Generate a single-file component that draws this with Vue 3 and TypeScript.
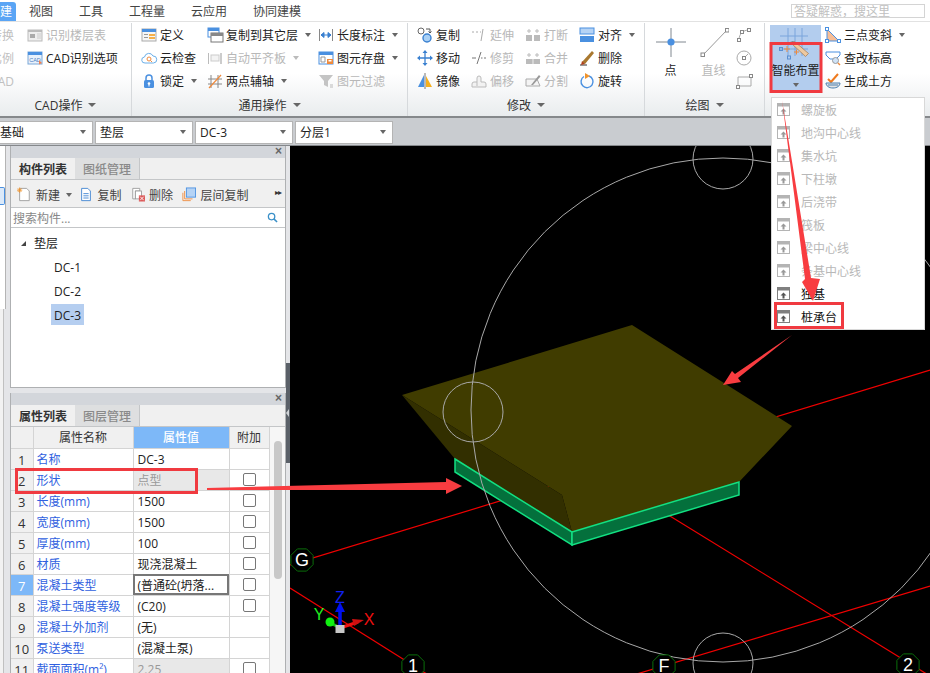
<script setup lang="ts">
interface Tool { icon: string; text: string; off?: boolean; caret?: boolean }
interface Col { width: number; tools: Tool[] }
interface Group { label: string; width: number; cols: Col[] }

const box = (x: number, y: number, s = 3, c = '#4a90e0') =>
  `<rect x="${x - s / 2}" y="${y - s / 2}" width="${s}" height="${s}" fill="#fff" stroke="${c}"/>`

const icons: Record<string, string> = {
  blank: '',
  floor: '<rect x="1" y="3" width="14" height="11" fill="#eee" stroke="#bbb"/><rect x="1" y="3" width="14" height="2" fill="#bbb"/><rect x="3" y="7" width="5" height="4" fill="#aaa"/><path d="M10 7h4M10 9h4M10 11h4" stroke="#ccc"/>',
  cadopt: '<rect x="1" y="2" width="14" height="12" fill="#e8f1fb" stroke="#7aa7d8"/><rect x="1" y="2" width="14" height="3" fill="#4a90e0"/><text x="2.2" y="12" font-size="5.5" fill="#4a80c0" font-family="Liberation Sans">CAD</text><path d="M12 10l3 3-3 1.5z" fill="#f08050"/>',
  def: '<rect x="1" y="2" width="14" height="12" fill="#f6f6f6" stroke="#aaa"/><rect x="1" y="2" width="14" height="3" fill="#4a90e0"/><path d="M3 7.5h4M3 10.5h4" stroke="#999"/><rect x="8" y="7" width="6" height="2" fill="#f5b04a"/><rect x="8" y="10" width="6" height="2" fill="#f5b04a"/>',
  cloud: '<path d="M4 13a3 3 0 0 1-.5-6A4.5 4.5 0 0 1 12 6a3.5 3.5 0 0 1 .5 7z" fill="#fff" stroke="#6aaee8"/><circle cx="8" cy="9" r="2" fill="none" stroke="#ef8a3c"/><path d="M9.5 10.5l1.5 1.5" stroke="#ef8a3c"/>',
  lock: '<rect x="3" y="7" width="10" height="8" rx="1.5" fill="#4a90e0"/><path d="M5 7V5a3 3 0 0 1 6 0v2" fill="none" stroke="#4a90e0" stroke-width="1.5"/><circle cx="8" cy="10.5" r="1.3" fill="#fff"/><rect x="7.5" y="11" width="1" height="2.5" fill="#fff"/>',
  copyf: '<rect x="1" y="1" width="11" height="9" fill="#fff" stroke="#4a90e0"/><rect x="1" y="1" width="11" height="3" fill="#4a90e0"/><rect x="4" y="6" width="12" height="9" fill="#fff" stroke="#777"/><rect x="4" y="6" width="12" height="3" fill="#888"/>',
  align: '<path d="M1.5 3v11" stroke="#bbb"/><rect x="4" y="5" width="8" height="6" fill="#f3f3f3" stroke="#ccc"/><rect x="13" y="3" width="2" height="11" fill="#ccc"/>',
  axis: '<path d="M4 2v13M11 2v13M1 6h14M1 11h14" stroke="#888"/><path d="M2 15L14 2" stroke="#ef8a3c" stroke-width="1.2"/>',
  dim: '<path d="M1.5 2v12M14.5 2v12" stroke="#888"/><path d="M3 8h10M3 8l3-2.5v5zM13 8l-3-2.5v5z" stroke="#3a80d0" fill="#3a80d0"/>',
  save: '<rect x="1" y="2" width="14" height="12" fill="#fff" stroke="#4a90e0"/><rect x="1" y="2" width="14" height="3" fill="#4a90e0"/><path d="M3 7h4v5H3z" fill="none" stroke="#999"/><rect x="9" y="9" width="6" height="5" fill="#ef8a3c"/><rect x="10.5" y="10" width="3" height="1.5" fill="#fff"/>',
  filter: '<path d="M1 2h14L10 8v6L6 12V8z" fill="#c4c4c4"/><path d="M12 12h3M12 14h3" stroke="#bbb"/>',
  cp: '<circle cx="4" cy="4" r="3" fill="#fff" stroke="#666"/><circle cx="10" cy="11" r="4" fill="#a9d0f5" stroke="#3a80d0" stroke-width="1.4"/><path d="M9 2h4v4M11.5 4.5l1.5 1.5 1.5-1.5" fill="none" stroke="#555"/>',
  move: '<path d="M8 2v12M2 8h12" stroke="#3a80d0" stroke-width="1.3"/><path d="M8 0l2.5 3h-5zM8 16l2.5-3h-5zM0 8l3-2.5v5zM16 8l-3-2.5v5z" fill="#3a80d0"/>',
  mirror: '<path d="M7 2L1 14h6z" fill="#4a90e0"/><path d="M9 3l6 11H9z" fill="#f5b01e"/><path d="M8 0v16" stroke="#777"/>',
  ext: '<path d="M1 5h2M5 5h2M9 5h1M12 2l-2 12" stroke="#aaa" fill="none"/>',
  trim: '<path d="M1 8h4M10 8h1.5M13 8h2M10 2L6 14" stroke="#777" fill="none"/>',
  off: '<path d="M6 13V5a2 2 0 0 1 4 0v4h3a2 2 0 0 1 2 2v3H1v-3a2 2 0 0 1 2-2h3" fill="#f2f2f2" stroke="#bbb"/>',
  brk: '<rect x="1" y="8" width="6" height="6" fill="#bbb"/><rect x="9" y="8" width="6" height="6" fill="#bbb"/><path d="M4 2v4M2 4h4M12 2v4M10 4h4" stroke="#bbb"/>',
  merge: '<rect x="1" y="9" width="14" height="5" fill="#bbb"/><path d="M8 9v5" stroke="#eee"/><path d="M4 3v4M2 5h4M12 3v4M10 5h4" stroke="#bbb"/>',
  split: '<path d="M1 6h11l3 7H1z" fill="#f4f4f4" stroke="#aaa"/><path d="M6 12L14 2l1.5 1.5L8 12z" fill="#999"/>',
  alignr: '<rect x="1" y="1" width="14" height="6" fill="#b5d3f5" stroke="#4a90e0"/><rect x="1" y="9" width="14" height="6" fill="#4a90e0"/>',
  del: '<path d="M1 15h7" stroke="#333"/><path d="M3 12L13 1l2 2L6 14z" fill="#a9782f"/><path d="M2 15l1-4 3 3z" fill="#b0401e"/>',
  rot: '<path d="M10 3a6 6 0 1 1-5 .5" fill="none" stroke="#4a90e0" stroke-width="1.4"/><path d="M6 0l5 3-5 3z" fill="#f0932b"/>',
  tilt: '<path d="M2 2v12h12z" fill="#f7bd95" stroke="#4a90e0"/>' + box(2, 2) + box(2, 14) + box(14, 14),
  elev: '<path d="M1 2h14v3l-4 4H5L1 5z" fill="#fff" stroke="#4a90e0"/><circle cx="10.5" cy="10.5" r="3" fill="#cfe3f8" stroke="#999"/><path d="M13 13l2 2" stroke="#ef8a3c" stroke-width="1.5"/>',
  earth: '<path d="M3 6l3 3 7-8" fill="none" stroke="#ef7a1e" stroke-width="2"/><path d="M1 10h14c0 3-3 5-7 5s-7-2-7-5z" fill="#e4e4e4" stroke="#4a80b0"/><path d="M3 12h10" stroke="#4a80b0"/>',
  arc: '<path d="M3 13C3 7 7 3 13 3" fill="none" stroke="#aaa"/>' + box(3, 13, 3, '#888') + box(6, 5, 3, '#888') + box(13, 3, 3, '#888'),
  circ: '<circle cx="8" cy="8" r="7" fill="none" stroke="#aaa"/><path d="M8 8l4-4" stroke="#aaa"/>' + box(8, 8, 3, '#888'),
  rect: '<path d="M2 4h13v9H2z" fill="none" stroke="#aaa"/>' + box(15, 3, 3, '#888') + box(2, 14, 3, '#888')
}

const t = (icon: string, text: string, off = false, caret = false): Tool => ({ icon, text, off, caret })

const groups: Group[] = [
  { label: '通用操作', width: 276, cols: [
    { width: 66, tools: [t('def', '定义'), t('cloud', '云检查'), t('lock', '锁定', false, true)] },
    { width: 111, tools: [t('copyf', '复制到其它层', false, true), t('align', '自动平齐板', true, true), t('axis', '两点辅轴', false, true)] },
    { width: 89, tools: [t('dim', '长度标注', false, true), t('save', '图元存盘', false, true), t('filter', '图元过滤', true)] }
  ] },
  { label: '修改', width: 237, cols: [
    { width: 54, tools: [t('cp', '复制'), t('move', '移动'), t('mirror', '镜像')] },
    { width: 54, tools: [t('ext', '延伸', true), t('trim', '修剪', true), t('off', '偏移', true)] },
    { width: 54, tools: [t('brk', '打断', true), t('merge', '合并', true), t('split', '分割', true)] },
    { width: 60, tools: [t('alignr', '对齐', false, true), t('del', '删除'), t('rot', '旋转')] }
  ] }
]

const thirdCol = ['arc', 'circ', 'rect']
const rightTools: Tool[] = [t('tilt', '三点变斜', false, true), t('elev', '查改标高'), t('earth', '生成土方')]
const combos = ['基础', '垫层', 'DC-3', '分层1']
const menus = ['视图', '工具', '工程量', '云应用', '协同建模']
const dcs = ['DC-1', 'DC-2', 'DC-3']
const dropdown = [
  { text: '螺旋板', off: true }, { text: '地沟中心线', off: true }, { text: '集水坑', off: true },
  { text: '下柱墩', off: true }, { text: '后浇带', off: true }, { text: '筏板', off: true },
  { text: '梁中心线', off: true }, { text: '条基中心线', off: true }, { text: '独基', off: false }, { text: '桩承台', off: false }
]

interface Row { name: string; value: string; check: boolean; gray?: boolean; black?: boolean; active?: boolean }
const rows: Row[] = [
  { name: '名称', value: 'DC-3', check: false },
  { name: '形状', value: '点型', check: true, gray: true },
  { name: '长度(mm)', value: '1500', check: true },
  { name: '宽度(mm)', value: '1500', check: true },
  { name: '厚度(mm)', value: '100', check: true },
  { name: '材质', value: '现浇混凝土', check: true },
  { name: '混凝土类型', value: '(普通砼(坍落...', check: true, active: true },
  { name: '混凝土强度等级', value: '(C20)', check: true },
  { name: '混凝土外加剂', value: '(无)', check: false },
  { name: '泵送类型', value: '(混凝土泵)', check: false },
  { name: '截面面积(m²)', value: '2.25', check: true, gray: true }
]

const hexPts = (cx: number, cy: number, r: number) =>
  Array.from({ length: 8 }, (_, i) => {
    const a = (Math.PI / 4) * i + Math.PI / 8
    return `${(cx + r * Math.cos(a)).toFixed(1)},${(cy + r * Math.sin(a)).toFixed(1)}`
  }).join(' ')
const axes = [
  { label: 'G', x: 302, y: 560 },
  { label: '1', x: 413, y: 666 },
  { label: 'F', x: 664, y: 666 },
  { label: '2', x: 908, y: 665 }
]
</script>

<template>
  <div class="app">
    <header class="menubar">
      <span class="menu active">建</span>
      <span v-for="m in menus" :key="m" class="menu">{{ m }}</span>
      <span class="qsearch">答疑解惑，搜这里</span>
    </header>

    <section class="ribbon">
      <div class="group cad">
        <div class="group-body">
          <div class="col clip">
            <span class="clip-text">转换</span>
            <span class="clip-text">比例</span>
            <span class="clip-text">CAD</span>
          </div>
          <div class="col">
            <div class="tool off"><svg class="ico" viewBox="0 0 16 16" v-html="icons.floor"></svg><span>识别楼层表</span></div>
            <div class="tool"><svg class="ico" viewBox="0 0 16 16" v-html="icons.cadopt"></svg><span>CAD识别选项</span></div>
          </div>
        </div>
        <div class="group-label"><span>CAD操作</span><i class="caret dark"></i></div>
      </div>

      <div v-for="g in groups" :key="g.label" class="group" :style="{ width: g.width + 'px' }">
        <div class="group-body pad">
          <div v-for="(c, ci) in g.cols" :key="ci" class="col" :style="{ width: c.width + 'px' }">
            <div v-for="tool in c.tools" :key="tool.text" class="tool" :class="{ off: tool.off }">
              <svg class="ico" viewBox="0 0 16 16" v-html="icons[tool.icon]"></svg>
              <span>{{ tool.text }}</span>
              <i v-if="tool.caret" class="caret" :class="{ faint: tool.off }"></i>
            </div>
          </div>
        </div>
        <div class="group-label"><span>{{ g.label }}</span><i class="caret dark"></i></div>
      </div>

      <div class="group draw">
        <div class="group-body draw-body">
          <div class="big">
            <svg class="big-ico" viewBox="0 0 30 30">
              <path d="M0 15h30M15 1v29" stroke="#808890" />
              <circle cx="15" cy="15" r="3.6" fill="#4a90e0" />
            </svg>
            <span>点</span>
          </div>
          <div class="big off">
            <svg class="big-ico" viewBox="0 0 30 30">
              <path d="M4 28L28 3" stroke="#999" />
              <rect x="2" y="26" width="3.5" height="3.5" fill="#fff" stroke="#888" />
              <rect x="26.5" y="1.5" width="3.5" height="3.5" fill="#fff" stroke="#888" />
            </svg>
            <span>直线</span>
          </div>
          <div class="col small-col">
            <div v-for="n in thirdCol" :key="n" class="tool"><svg class="ico" viewBox="0 0 16 16" v-html="icons[n]"></svg></div>
          </div>
        </div>
        <div class="group-label"><span>绘图</span><i class="caret dark"></i></div>
      </div>

      <div class="group smart">
        <div class="group-body smart-body">
          <div class="smart-btn">
            <svg class="smart-ico" viewBox="0 0 51 37">
              <path d="M10 11h28M10 24h28M18 3v28M25 3v28M32 3v28" stroke="#7aa5dc" fill="none" />
              <rect x="9.5" y="22.5" width="3" height="3" fill="none" stroke="#5a8fd0" />
              <rect x="17.5" y="31" width="3" height="3" fill="none" stroke="#5a8fd0" />
              <path d="M14 24h6M17 21v6M24 27h5M26.5 24.5v5" stroke="#ef8a3c" />
              <path d="M22 19l2.5-2.5 14 12-3 3z" fill="#eec9a0" stroke="#a5774a" stroke-width=".7" />
              <path d="M20 17l4-1-2 3z" fill="#666" />
            </svg>
            <span>智能布置</span>
            <i class="caret"></i>
          </div>
          <div class="col">
            <div v-for="tool in rightTools" :key="tool.text" class="tool">
              <svg class="ico" viewBox="0 0 16 16" v-html="icons[tool.icon]"></svg>
              <span>{{ tool.text }}</span>
              <i v-if="tool.caret" class="caret"></i>
            </div>
          </div>
        </div>
      </div>
    </section>

    <section class="combos">
      <div v-for="c in combos" :key="c" class="combo"><span>{{ c }}</span><i class="caret"></i></div>
    </section>

    <main class="work">
      <aside class="sliver">
        <div class="sliver-top"><div class="sliver-btn"></div></div>
        <div class="sliver-bottom"></div>
      </aside>

      <div class="panels">
        <section class="panel list-panel">
          <div class="title-bar"><span class="close">×</span></div>
          <div class="tabs">
            <span class="tab on">构件列表</span>
            <span class="tab">图纸管理</span>
          </div>
          <div class="toolbar">
            <svg class="tb-ico first" viewBox="0 0 16 16"><path d="M3 1h8l3 3v11H3z" fill="#fff" stroke="#999" /><path d="M1 1l4 4M5 1L1 5M3 0v6M0 3h6" stroke="#f0932b" /></svg>
            <span>新建</span><i class="caret"></i>
            <svg class="tb-ico" viewBox="0 0 16 16"><path d="M3 1h7l3 3v11H3z" fill="#fff" stroke="#3a80d0" /><path d="M5 7h6M5 9.5h6M5 12h6" stroke="#3a80d0" /></svg>
            <span>复制</span>
            <svg class="tb-ico" viewBox="0 0 16 16"><path d="M2 1h8v3H5v9H2z" fill="#fff" stroke="#999" /><rect x="5" y="4" width="7" height="9" fill="#fff" stroke="#999" /><rect x="9" y="9" width="7" height="7" fill="#dc5a5a" /><path d="M10.5 10.5l4 4M14.5 10.5l-4 4" stroke="#fff" /></svg>
            <span>删除</span>
            <svg class="tb-ico" viewBox="0 0 16 16"><rect x="5" y="0.5" width="10.5" height="10.5" fill="#b5d3f5" stroke="#4a90e0" /><path d="M3 4v9h9M1 6v9h9" fill="none" stroke="#ef8a3c" /></svg>
            <span>层间复制</span>
            <span class="more">▸▸</span>
          </div>
          <div class="search">
            <span>搜索构件...</span>
            <svg class="search-ico" viewBox="0 0 12 12"><circle cx="5" cy="5" r="3.5" fill="none" stroke="#3a90c8" stroke-width="1.4" /><path d="M7.5 7.5l3.5 3.5" stroke="#3a90c8" stroke-width="1.6" /></svg>
          </div>
          <div class="tree">
            <div class="tree-root"><i class="tree-arrow"></i><span>垫层</span></div>
            <div v-for="d in dcs" :key="d" class="tree-leaf"><span :class="{ picked: d === 'DC-3' }">{{ d }}</span></div>
          </div>
        </section>

        <section class="panel prop-panel">
          <div class="title-bar"><span class="close">×</span></div>
          <div class="tabs">
            <span class="tab on">属性列表</span>
            <span class="tab">图层管理</span>
          </div>
          <div class="prop-body">
            <table class="props">
              <colgroup><col class="c-num" /><col class="c-name" /><col class="c-val" /><col class="c-add" /></colgroup>
              <thead>
                <tr><th></th><th>属性名称</th><th class="head-val">属性值</th><th>附加</th></tr>
              </thead>
              <tbody>
                <tr v-for="(r, i) in rows" :key="r.name">
                  <td class="num" :class="{ 'num-on': r.active }">{{ i + 1 }}</td>
                  <td class="name">{{ r.name }}</td>
                  <td class="val" :class="{ gray: r.gray, active: r.active }"><span>{{ r.value }}</span></td>
                  <td class="add"><span v-if="r.check" class="check"></span></td>
                </tr>
              </tbody>
            </table>
            <div class="scroll"><div class="thumb"></div></div>
          </div>
        </section>
      </div>

      <div class="splitter"><div class="split-dark"><i class="split-handle"></i></div></div>

      <div class="canvas">
        <svg class="scene" viewBox="290 146 640 527">
          <g stroke="#f00000" stroke-width="1.2" fill="none">
            <path d="M290 565L930 370" />
            <path d="M290 588L430 676" />
            <path d="M600 473L930 676" />
            <path d="M630 676L930 586" />
          </g>
          <polygon points="402,395 632,325 792,426 739,482 572,532 562,495" fill="#403c00" />
          <polygon points="402,395 562,495 572,532 455,459" fill="#322f00" />
          <polygon points="455,459 572,532 572,545 455,472" fill="#04703c" stroke="#12e082" stroke-width="1.5" />
          <polygon points="572,532 739,482 739,495 572,545" fill="#04703c" stroke="#12e082" stroke-width="1.5" />
          <g fill="none" stroke="#a8a8a8">
            <circle cx="723" cy="410" r="252" />
            <circle cx="473" cy="412" r="30" />
            <circle cx="723" cy="159" r="30" />
            <circle cx="723" cy="663" r="30" />
          </g>
          <g v-for="a in axes" :key="a.label">
            <polygon :points="hexPts(a.x, a.y, 12)" fill="#000" stroke="#0a6e0a" />
            <text :x="a.x" :y="a.y + 6" text-anchor="middle" class="axis-label">{{ a.label }}</text>
          </g>
          <path d="M340 606v20" stroke="#0010f0" stroke-width="3.5" />
          <path d="M340 602l5 10h-10z" fill="#0010f0" />
          <path d="M340 628L329 622" stroke="#10c010" stroke-width="3" />
          <circle cx="330" cy="622" r="4.5" fill="#10f010" />
          <path d="M340 628L358 622" stroke="#f01010" stroke-width="3" />
          <path d="M352 619l12 1-10 6z" fill="#d01010" />
          <rect x="335.5" y="625" width="9" height="8" fill="#c8c8c8" />
          <text x="340" y="603" text-anchor="middle" class="gizmo z">Z</text>
          <text x="319" y="620" text-anchor="middle" class="gizmo y">Y</text>
          <text x="369" y="625" text-anchor="middle" class="gizmo x">X</text>
        </svg>
      </div>
    </main>

    <nav class="dropdown">
      <div v-for="d in dropdown" :key="d.text" class="drop-item" :class="{ off: d.off }">
        <svg class="drop-ico" viewBox="0 0 13 13">
          <rect x="0.5" y="0.5" width="12" height="12" fill="#fff" :stroke="d.off ? '#b4b4b4' : '#808080'" />
          <rect x="0.5" y="0.5" width="12" height="3" :fill="d.off ? '#b4b4b4' : '#808080'" />
          <path d="M6.5 5.5l3 3h-2v3h-2v-3h-2z" :fill="d.off ? '#999' : '#555'" />
        </svg>
        <span>{{ d.text }}</span>
      </div>
    </nav>

    <svg class="notes" viewBox="0 0 930 673">
      <g fill="none" stroke="#f03a40" stroke-width="3">
        <rect x="771" y="43.5" width="50" height="48" />
        <rect x="775.5" y="303.5" width="67" height="24" />
        <rect x="16.5" y="469.5" width="180" height="23" />
      </g>
      <g fill="#f83c40">
        <polygon points="782,100 805,279 802,282 813,301 820,279 811,278" />
        <polygon points="792,335 738,378 741,382 723,385 732,371 735,374" />
        <polygon points="207,488 446,482 446,478 462,486 446,494 446,490 207,490" />
      </g>
    </svg>
  </div>
</template>

<style>
html, body { margin: 0; padding: 0; background: #fff; }
</style>

<style scoped>
.app {
  position: relative;
  width: 930px;
  height: 673px;
  overflow: hidden;
  display: flex;
  flex-direction: column;
  font-family: "Open Sans", "Noto Sans CJK SC", "Noto Sans", sans-serif;
  font-size: 12px;
  line-height: 16px;
  color: #222;
  background: #fff;
}
.menubar {
  height: 21px;
  flex: none;
  display: flex;
  align-items: flex-end;
  background: #fff;
  border-bottom: 1px solid #e2e2e2;
  color: #444;
}
.menu { height: 19px; line-height: 19px; padding: 0 13px; }
.menu.active { width: 16px; box-sizing: border-box; padding: 0 4px 0 0; text-align: right; background: #5aa5f5; color: #fff; border-radius: 0 3px 0 0; }
.qsearch {
  position: absolute;
  left: 791px;
  top: 4px;
  width: 134px;
  height: 14px;
  line-height: 13px;
  box-sizing: border-box;
  border: 1px solid #d4d4d4;
  padding-left: 2px;
  color: #c0c0c0;
  overflow: hidden;
}
.ribbon {
  height: 96px;
  flex: none;
  display: flex;
  background: linear-gradient(#fff 55%, #e9ecee);
  border-bottom: 2px solid #85888b;
  box-sizing: border-box;
}
.group {
  flex: none;
  box-sizing: border-box;
  border-right: 1px solid #d6d9dc;
  margin-top: 1px;
  display: flex;
  flex-direction: column;
  justify-content: space-between;
}
.group.cad { width: 132px; }
.group.draw { width: 120px; }
.group.smart { flex: 1; border-right: none; }
.group-body { display: flex; height: 69px; }
.group-body.pad { padding-left: 9px; }
.group-label { height: 22px; display: flex; align-items: center; justify-content: center; gap: 6px; color: #333; }
.group-label span { padding-top: 2px; }
.col { display: flex; flex-direction: column; flex: none; }
.clip { width: 27px; padding-right: 13px; box-sizing: border-box; align-items: flex-end; color: #c0c0c0; overflow: hidden; }
.clip-text { height: 23px; line-height: 25px; white-space: nowrap; flex: none; }
.tool { height: 23px; display: flex; align-items: center; white-space: nowrap; }
.tool span { padding-top: 2px; }
.tool.off { color: #b8b8b8; }
.ico { width: 16px; height: 16px; margin-right: 3px; flex: none; overflow: visible; }
.caret {
  display: inline-block;
  width: 0;
  height: 0;
  margin-left: 7px;
  border-left: 3.5px solid transparent;
  border-right: 3.5px solid transparent;
  border-top: 4px solid #666;
  flex: none;
}
.caret.faint { border-top-color: #bbb; }
.caret.dark { margin-left: 0; border-left-width: 4px; border-right-width: 4px; border-top: 4px solid #666; }
.draw-body { padding-left: 4px; }
.big { width: 43px; display: flex; flex-direction: column; align-items: center; flex: none; padding-top: 4px; }
.big span { padding-top: 1px; }
.big.off { color: #b8b8b8; }
.big-ico { width: 30px; height: 30px; margin-bottom: 5px; }
.small-col { margin-left: 1px; }
.smart-body { padding-left: 5px; }
.smart-btn {
  width: 51px;
  height: 67px;
  background: #b3cdee;
  display: flex;
  flex-direction: column;
  align-items: center;
  flex: none;
  margin-top: 2px;
  margin-right: 4px;
}
.smart-btn .caret { margin: 4px 0 0; }
.smart-ico { width: 51px; height: 37px; flex: none; }
.smart-btn span { white-space: nowrap; line-height: 16px; padding-top: 1px; }
.combos {
  height: 28px;
  flex: none;
  display: flex;
  gap: 2px;
  align-items: center;
  background: #c9ccd0;
  box-sizing: border-box;
  padding-left: 0;
}
.combo {
  width: 98px;
  height: 23px;
  box-sizing: border-box;
  background: #fff;
  border: 1px solid #b4b4b4;
  display: flex;
  align-items: center;
  justify-content: space-between;
  padding: 0 6px 0 4px;
  flex: none;
}
.combo span { padding-top: 2px; }
.combo:first-child { width: 93px; padding-left: 0; border-left: none; }
.combo .caret { margin: 0; }
.work { flex: 1; min-height: 0; display: flex; background: #e4e5e8; border-top: 1px solid #85888b; margin-top: -1px; }
.sliver { width: 10px; flex: none; display: flex; flex-direction: column; }
.sliver-top { width: 6px; height: 217px; box-sizing: border-box; background: #fff; border-right: 1px solid #b4b4b4; padding-top: 41px; overflow: hidden; }
.sliver-btn { width: 5px; height: 18px; box-sizing: border-box; border: 1px solid #4a90e0; background: #dbe9f9; border-left: none; border-radius: 0 2px 2px 0; }
.sliver-bottom { width: 3px; height: 100%; background: #f2f2f2; border-right: 1px solid #c0c0c0; }
.panels { width: 276px; flex: none; display: flex; flex-direction: column; gap: 5px; }
.panel { box-sizing: border-box; border: 1px solid #aeb0b2; border-top: none; background: #fff; overflow: hidden; }
.list-panel { height: 242px; flex: none; display: flex; flex-direction: column; }
.prop-panel { flex: 1; min-height: 0; border-bottom: none; }
.title-bar { height: 12px; background: #d3d6db; position: relative; }
.close { position: absolute; right: 3px; top: -3px; font: bold 12px/16px "Liberation Sans", sans-serif; color: #666; }
.tabs { height: 22px; display: flex; background: #f0f0f0; border-bottom: 1px solid #c4c6c8; box-sizing: border-box; }
.tab { width: 65px; text-align: center; line-height: 23px; background: #dedfe0; color: #8a8a8a; border-right: 1px solid #c4c6c8; box-sizing: border-box; font-weight: 500; }
.tab.on { width: 64px; background: #f0f0f0; color: #333; font-weight: 700; border-right: none; }
.toolbar {
  height: 28px;
  display: flex;
  align-items: center;
  background: #f0f0f0;
  border-bottom: 1px solid #c4c6c8;
  box-sizing: border-box;
  color: #444;
  padding: 2px 0 0 6px;
  white-space: nowrap;
  position: relative;
}
.toolbar > span:not(.more) { padding-top: 2px; }
.tb-ico { width: 14px; height: 15px; margin: 0 4.5px 0 9px; flex: none; }
.tb-ico.first { margin: 0 5px 0 0; }
.toolbar .caret { margin: 0 -2px 0 6px; }
.more { position: absolute; right: 4px; top: 6px; font: 8px/14px "DejaVu Sans", sans-serif; color: #333; letter-spacing: -1px; }
.search { height: 20px; display: flex; align-items: center; justify-content: space-between; padding: 0 7px 0 2px; border-bottom: 1px solid #c4c6c8; color: #888; box-sizing: border-box; }
.search span { padding-top: 2px; }
.search-ico { width: 11px; height: 11px; }
.tree { flex: 1; background: #fff; padding-top: 3px; }
.tree-root { height: 24px; display: flex; align-items: center; padding-left: 10px; color: #222; margin-bottom: -1px; }
.tree-root span { padding-top: 2px; }
.tree-arrow { width: 0; height: 0; border-left: 5px solid transparent; border-bottom: 5px solid #444; margin-right: 8px; }
.tree-leaf { height: 24px; padding-left: 40px; display: flex; align-items: center; }
.tree-leaf span { padding: 0 3px; height: 21px; line-height: 23px; }
.tree-leaf .picked { background: #b5cef0; }
.prop-body { display: flex; align-items: flex-start; }
.props { border-collapse: collapse; table-layout: fixed; width: 258px; flex: none; }
.c-num { width: 22px; }
.c-name { width: 100px; }
.c-val { width: 96px; }
.c-add { width: 40px; }
.props th, .props td { height: 21px; padding: 2px 0 0; border: 1px solid #d4d4d4; box-sizing: border-box; white-space: nowrap; overflow: hidden; font-weight: 400; }
.props th { background: #f0f0f0; color: #333; text-align: center; border-top: none; }
.props th:first-child, .props td:first-child { border-left: none; }
.props .head-val { background: #7db8f8; color: #fff; font-weight: 500; }
.num { background: #f0f0f0; text-align: center; color: #333; font-size: 13px; }
.num-on { background: #7db8f8; color: #fff; font-weight: 700; }
.name { color: #2f5fe0; padding-left: 3px !important; }
.val { padding-left: 4px !important; color: #222; }
.val.gray { background: #e8e8e8; color: #999; }
.val.active { outline: 2px solid #777; outline-offset: -2px; }
.props .add { text-align: center; line-height: 0; padding-top: 0; }
.check { display: inline-block; width: 13px; height: 13px; box-sizing: border-box; border: 1px solid #777; border-radius: 2px; background: #fff; vertical-align: middle; }
.scroll { flex: 1; height: 260px; background: #f6f6f6; position: relative; }
.thumb { position: absolute; left: 4px; top: 14px; width: 8px; height: 138px; border-radius: 4px; background: #c8c8c8; }
.splitter { width: 4px; flex: none; padding-top: 217px; }
.split-dark { height: 100px; background: #5a6068; position: relative; }
.split-handle { position: absolute; left: 0; top: 46px; width: 0; height: 0; border-top: 4px solid transparent; border-bottom: 4px solid transparent; border-right: 3px solid #cfd2d6; }
.canvas { flex: 1; min-width: 0; background: #000; overflow: hidden; }
.scene { display: block; width: 640px; height: 527px; }
.axis-label { font: 18px "Liberation Sans", sans-serif; fill: #fff; }
.gizmo { font: 16px "Liberation Sans", sans-serif; }
.gizmo.z { fill: #1020f0; }
.gizmo.y { fill: #20f020; }
.gizmo.x { fill: #f01010; }
.dropdown {
  position: absolute;
  left: 771px;
  top: 97px;
  width: 154px;
  height: 233px;
  box-sizing: border-box;
  background: #fff;
  border: 1px solid #d8d8d8;
}
.drop-item { height: 23px; display: flex; align-items: center; padding-left: 5px; color: #111; }
.drop-item span { padding-top: 2px; }
.drop-item.off { color: #b8b8b8; }
.drop-ico { width: 13px; height: 13px; margin-right: 11px; flex: none; }
.notes { position: absolute; left: 0; top: 0; width: 930px; height: 673px; pointer-events: none; }
</style>
